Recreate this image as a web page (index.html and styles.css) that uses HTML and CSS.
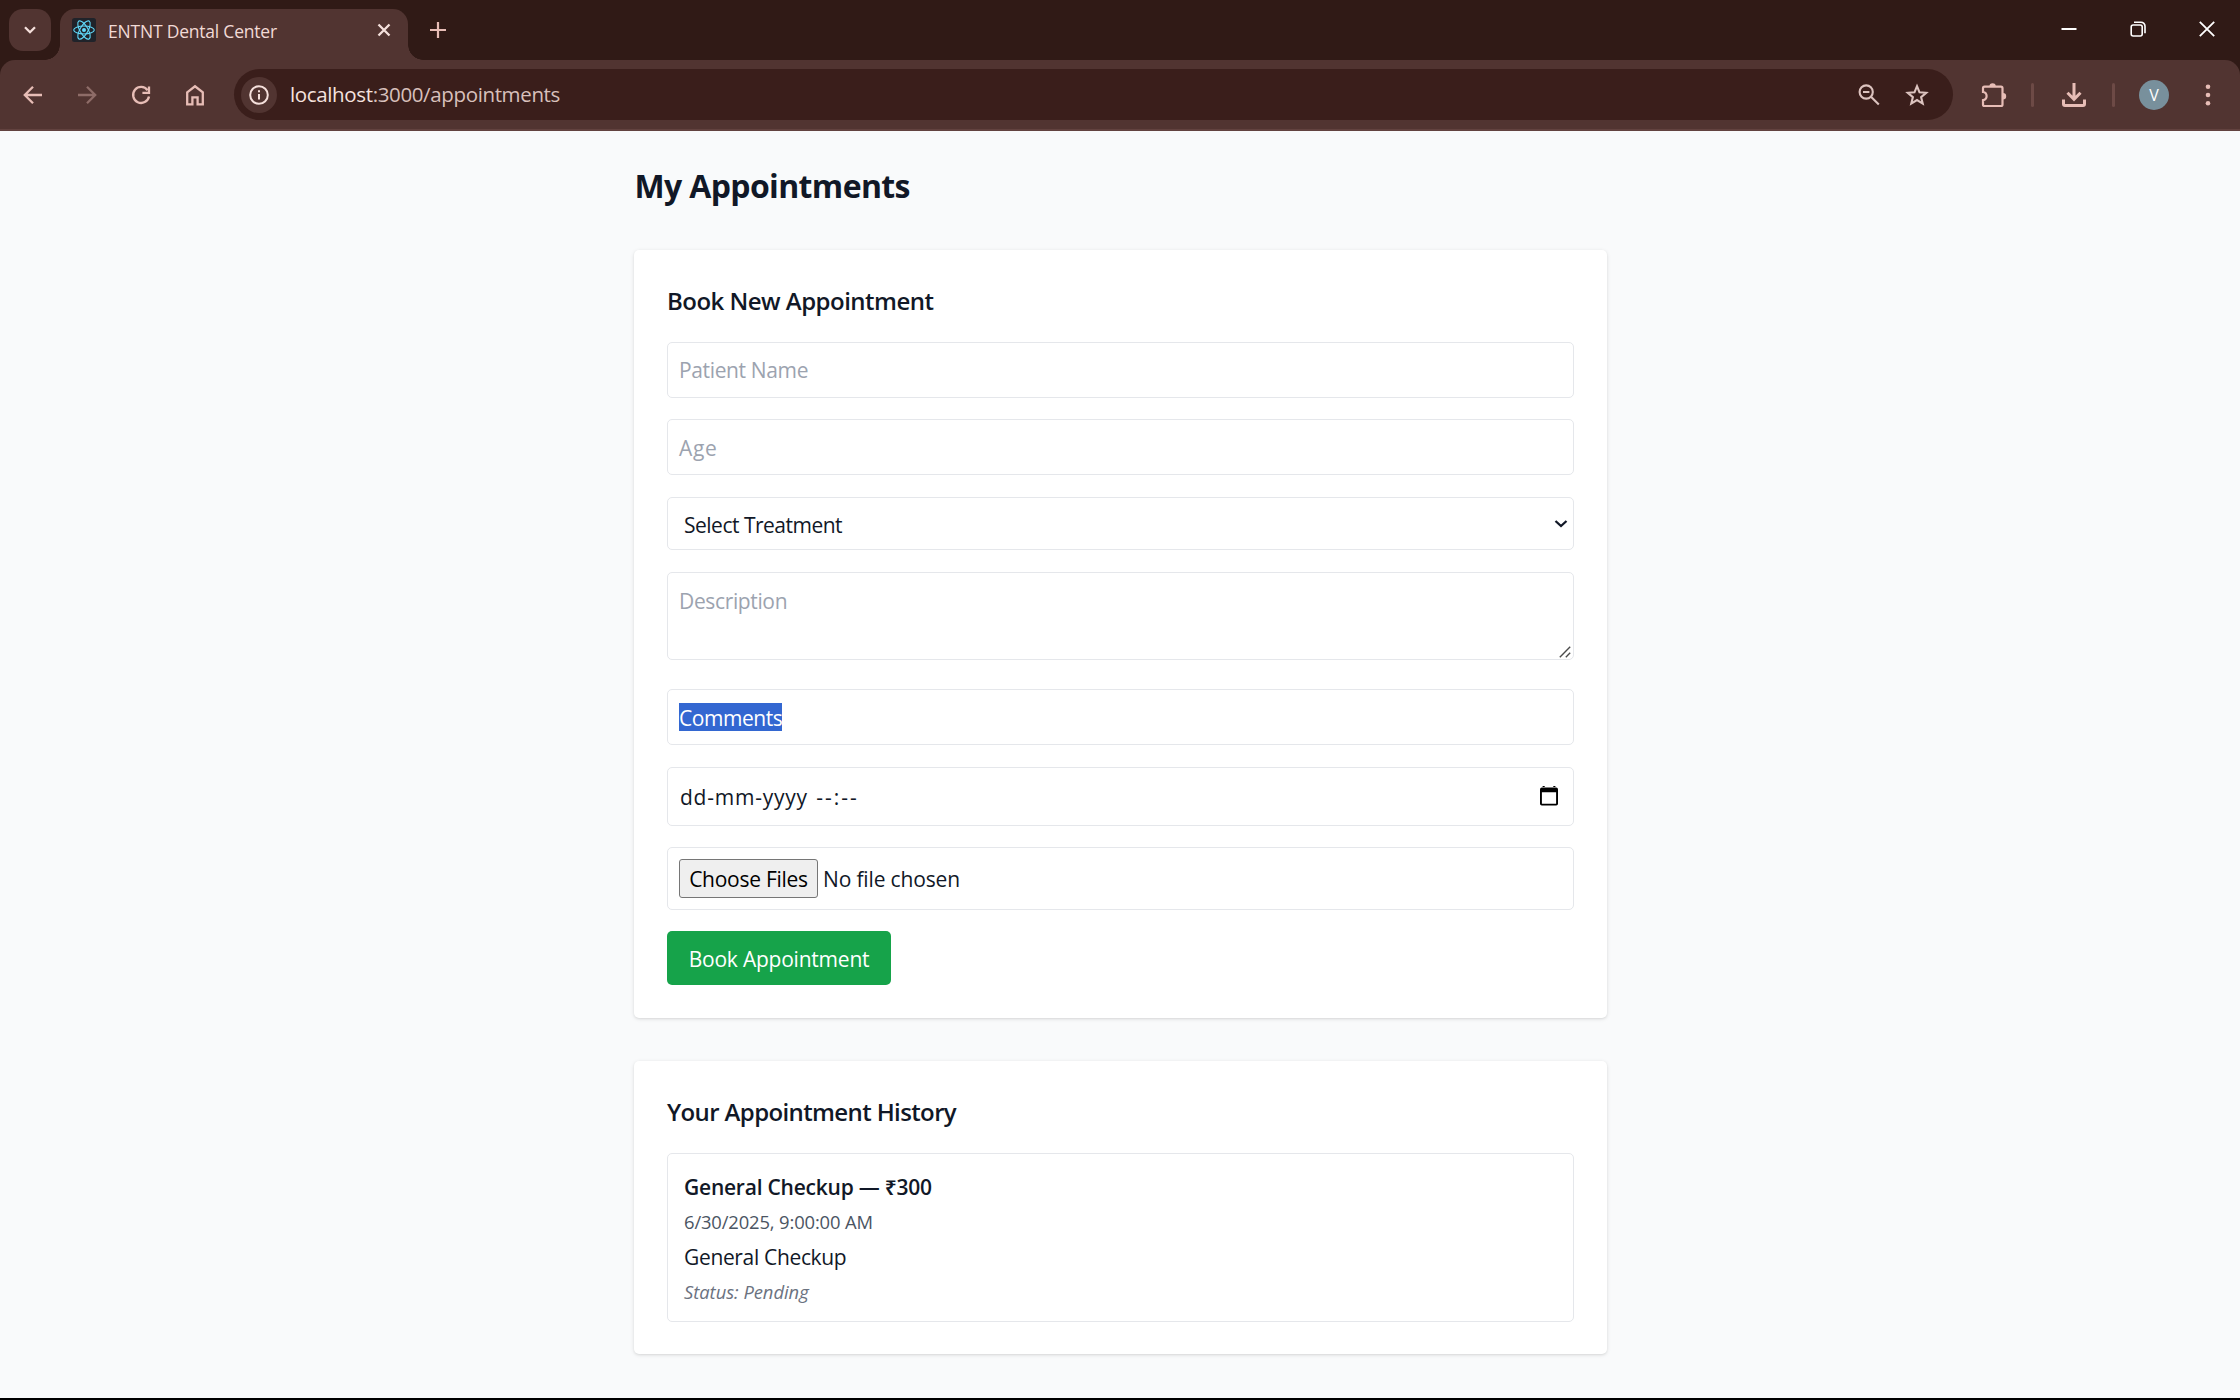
FILE: index.html
```html
<!DOCTYPE html>
<html lang="en">
<head>
<meta charset="utf-8">
<title>ENTNT Dental Center</title>
<link rel="stylesheet" href="styles.css">
</head>
<body>
<div class="browser">
  <header class="tabstrip">
    <button class="tab-search" aria-label="Search tabs">
      <svg width="12" height="8" viewBox="0 0 12 8"><path d="M1 1.200l5 5 5-5" fill="none" stroke="#f5e0dc" stroke-width="2.300"/></svg>
    </button>
    <div class="tab">
      <svg class="favicon" width="24" height="24" viewBox="0 0 24 24"><rect width="24" height="24" rx="2.500" fill="#20232a"/><g fill="none" stroke="#61dafb" stroke-width="1.100"><ellipse cx="12" cy="12" rx="10.300" ry="4"/><ellipse cx="12" cy="12" rx="10.300" ry="4" transform="rotate(60 12 12)"/><ellipse cx="12" cy="12" rx="10.300" ry="4" transform="rotate(120 12 12)"/></g><circle cx="12" cy="12" r="2" fill="#61dafb"/></svg>
      <span class="tab-title">ENTNT Dental Center</span>
      <svg class="tab-close" width="14" height="14" viewBox="0 0 14 14"><path d="M1.500 1.500l11 11M12.500 1.500l-11 11" stroke="#f5e0dc" stroke-width="2.300"/></svg>
    </div>
    <svg class="new-tab" width="16" height="16" viewBox="0 0 16 16"><path d="M8 0v16M0 8h16" stroke="#e7bdb6" stroke-width="2.200"/></svg>
    <div class="window-controls">
      <svg width="16" height="16" viewBox="0 0 16 16"><path d="M.5 8h15" stroke="#fff" stroke-width="2"/></svg>
      <svg width="16" height="16" viewBox="0 0 16 16" fill="none" stroke="#fff" stroke-width="1.600"><rect x="1.200" y="4" width="11" height="11" rx="2"/><path d="M4 1.200h7a4 4 0 0 1 4 4v7"/></svg>
      <svg width="16" height="16" viewBox="0 0 16 16"><path d="M.8.8l14.400 14.400M15.200.8L.8 15.200" stroke="#fff" stroke-width="1.800"/></svg>
    </div>
  </header>
  <nav class="toolbar">
    <div class="nav-buttons">
      <svg width="24" height="24" viewBox="0 0 24 24" fill="none" stroke="#e7bdb6" stroke-width="2.300"><path d="M21 12H4.500M12 3.800L3.800 12l8.200 8.200"/></svg>
      <svg width="24" height="24" viewBox="0 0 24 24" fill="none" stroke="#8e6c68" stroke-width="2.300"><path d="M3 12h16.500M12 3.800l8.200 8.200-8.200 8.200"/></svg>
      <svg width="24" height="24" viewBox="0 0 24 24" fill="none" stroke="#e7bdb6" stroke-width="2.300"><path d="M18.600 7.200A8 8 0 1 0 20 13.500"/><path d="M20 3.500v6.400h-6.600"/></svg>
      <svg width="24" height="24" viewBox="0 0 24 24" fill="none" stroke="#e7bdb6" stroke-width="2.300"><path d="M4.200 9.300L12 3.300l7.800 6v12h-5.200v-7H9.400v7H4.200z"/></svg>
    </div>
    <div class="omnibox">
      <span class="site-info"><svg width="20" height="20" viewBox="0 0 20 20"><circle cx="10" cy="10" r="8.800" fill="none" stroke="#f5e0dc" stroke-width="2"/><path d="M10 9v5.500M10 5.300v2" stroke="#f5e0dc" stroke-width="2"/></svg></span>
      <span class="url"><span class="host">localhost</span>:3000/appointments</span>
      <svg class="zoom" width="24" height="24" viewBox="0 0 24 24" fill="none" stroke="#dcc3bf" stroke-width="2.100"><circle cx="9.200" cy="9" r="6.600"/><path d="M14 13.800l7.800 7.800M6 9h6.400"/></svg>
      <svg width="24" height="24" viewBox="0 0 24 24" fill="none" stroke="#dcc3bf" stroke-width="2.100"><path d="M12 3.200l2.500 6.100 6.700.5-5.100 4.300 1.600 6.500-5.700-3.500-5.700 3.500 1.600-6.500-5.100-4.300 6.700-.5z"/></svg>
    </div>
    <svg class="extensions" width="26" height="26" viewBox="0 0 26 26"><path d="M3.500 4.700H20a1.500 1.500 0 0 1 1.500 1.500v16.300a1.500 1.500 0 0 1-1.500 1.500H3.500A1.500 1.500 0 0 1 2 22.500v-4.300c4.800-.6 4.800-7.600 0-8.200V6.200a1.500 1.500 0 0 1 1.500-1.500z" fill="none" stroke="#e7bdb6" stroke-width="2.200"/><path d="M8.400 4.500a3.200 3.200 0 0 1 6.400 0zM22 11a3.200 3.200 0 0 1 0 6.400z" fill="#e7bdb6"/></svg>
    <i class="divider"></i>
    <svg class="download" width="24" height="24" viewBox="0 0 24 24" fill="none" stroke="#e7bdb6" stroke-width="3"><path d="M12 0v16M5.500 9.800l6.500 6.500 6.500-6.500"/><path d="M1.500 16.500v4.500a1.500 1.500 0 0 0 1.500 1.500h18a1.500 1.500 0 0 0 1.500-1.500v-4.500"/></svg>
    <i class="divider"></i>
    <span class="avatar">V</span>
    <svg class="menu" width="6" height="22" viewBox="0 0 6 22" fill="#e7bdb6"><circle cx="3" cy="2.800" r="2.300"/><circle cx="3" cy="11" r="2.300"/><circle cx="3" cy="19.200" r="2.300"/></svg>
  </nav>
  <main class="page">
    <div class="content">
      <h1 class="page-title">My Appointments</h1>
      <section class="card">
        <h2 class="card-title book-title">Book New Appointment</h2>
        <form class="form">
          <div class="field placeholder"><span class="t-name">Patient Name</span></div>
          <div class="field placeholder age"><span class="t-age">Age</span></div>
          <div class="field select"><span class="t-select">Select Treatment</span>
            <svg width="14" height="8" viewBox="0 0 14 8"><path d="M1.500 1l5.500 5 5.500-5" fill="none" stroke="#111827" stroke-width="2.300"/></svg>
          </div>
          <div class="field placeholder textarea"><span class="t-desc">Description</span>
            <svg class="grip" width="12" height="12" viewBox="0 0 12 12"><path d="M.8 11.200L11.200.8M6.800 11.200l4.400-4.400" stroke="#4b4b4b" stroke-width="1.400"/></svg>
          </div>
          <div class="field comments"><span class="selected">Comments</span></div>
          <div class="field date"><span class="t-date">dd-mm-yyyy</span><span class="t-time">--:--</span>
            <svg width="18" height="20" viewBox="0 0 18 20"><path d="M1.800 1.600h14.400A1.800 1.800 0 0 1 18 3.400v14.300a1.800 1.800 0 0 1-1.800 1.800H1.800A1.800 1.800 0 0 1 0 17.700V3.400a1.800 1.800 0 0 1 1.800-1.800zM1.900 6.200v11.500h14.200V6.200zM2.600 0h2.100v2H2.600zM13.300 0h2.100v2h-2.100z" fill-rule="evenodd"/></svg>
          </div>
          <div class="field file"><span class="choose">Choose Files</span><span class="t-none">No file chosen</span></div>
          <button type="button" class="submit">Book Appointment</button>
        </form>
      </section>
      <section class="card">
        <h2 class="card-title history-title">Your Appointment History</h2>
        <article class="visit">
          <p class="visit-name">General Checkup — ₹300</p>
          <p class="visit-date">6/30/2025, 9:00:00 AM</p>
          <p class="visit-desc">General Checkup</p>
          <p class="visit-status">Status: Pending</p>
        </article>
      </section>
    </div>
  </main>
</div>
</body>
</html>
```
FILE: styles.css
```css
* { box-sizing: border-box; }
body { margin: 0; font-family: "Open Sans", "Noto Sans", sans-serif; font-size: 21px; color: #111827; }
h1, h2, p { margin: 0; }
svg { display: block; flex: none; }
button { border: 0; padding: 0; font: inherit; }
span { white-space: nowrap; }

.browser { height: 1400px; display: flex; flex-direction: column; overflow: hidden; background: #000; }

/* Tab strip: extends behind the toolbar's rounded top corners */
.tabstrip { height: 75px; margin-bottom: -15px; flex: none; display: flex; align-items: flex-start; padding: 9px 25px 0 9px; background: #301a16; }
.tab-search { width: 42px; height: 42px; border-radius: 14px; background: #513431; display: flex; align-items: center; justify-content: center; }
.tab { position: relative; width: 348px; height: 51px; margin-left: 9px; padding: 0 17px 9px 12px; border-radius: 15px 15px 0 0; background: #513431; display: flex; align-items: center; }
.tab::before, .tab::after { content: ""; position: absolute; bottom: 0; width: 15px; height: 15px; }
.tab::before { left: -15px; background: radial-gradient(circle at 0 0, transparent 14.5px, #513431 15px); }
.tab::after { right: -15px; background: radial-gradient(circle at 100% 0, transparent 14.5px, #513431 15px); }
.tab-title { margin-left: 12px; padding-top: 2px; font-size: 17.5px; letter-spacing: -.21px; color: #f1dad6; }
.tab-close { margin-left: auto; }
.new-tab { margin: 13px 0 0 22px; }
.window-controls { margin: 12px 0 0 auto; display: flex; gap: 53px; }

/* Toolbar */
.toolbar { position: relative; height: 71px; flex: none; display: flex; align-items: center; padding: 0 29px 0 21px; background: linear-gradient(#62423f, #62423f) bottom / 100% 2px no-repeat #513431; border-radius: 15px 15px 0 0; }
.nav-buttons { display: flex; gap: 30px; margin-top: -1px; }
.omnibox { width: 1719px; height: 51px; margin: -2px 0 0 27px; padding: 0 24px 0 7px; border-radius: 26px; background: #3a1e1b; display: flex; align-items: center; }
.site-info { width: 36px; height: 36px; border-radius: 50%; background: #513431; display: flex; align-items: center; justify-content: center; }
.url { margin: 0 auto 2px 13px; font-size: 20.5px; letter-spacing: -.36px; color: #d8c0bc; }
.host { color: #f5e2df; }
.zoom { margin-right: 24px; }
.extensions { margin: -2px 0 0 28px; }
.divider { width: 3px; height: 24px; border-radius: 2px; background: #6d4a46; margin: -1px 0 0 24px; }
.download { margin: 0 0 1px 28px; }
.download + .divider { margin-left: 26px; }
.avatar { width: 30px; height: 30px; margin: -1px 0 0 24px; border-radius: 50%; background: #78909c; color: #fff; font-size: 16px; line-height: 30px; text-align: center; }
.menu { margin: -1px 0 0 auto; }

/* Page */
.page { height: 1267px; flex: none; background: #f9fafb; padding-left: 1px; }
.content { width: 973px; margin: 0 auto; padding-top: 33px; }
.page-title { font-size: 32px; line-height: 43px; letter-spacing: -.64px; margin-bottom: 43px; padding-left: .5px; }
.card { background: #fff; border-radius: 5px; padding: 32px 33px 33px; box-shadow: 0 1px 4px rgba(0,0,0,.1), 0 1px 3px -1px rgba(0,0,0,.12); }
.card + .card { margin-top: 43px; padding-bottom: 32px; }
.card-title { font-weight: 600; font-size: 24px; line-height: 38px; margin-bottom: 22px; }
.book-title { letter-spacing: -.52px; }
.history-title { letter-spacing: -.62px; }

.form { display: flex; flex-direction: column; align-items: flex-start; }
.field { width: 100%; height: 56px; border: 1px solid #e5e7eb; border-radius: 5px; padding: 0 11px; display: flex; align-items: center; margin-bottom: 21px; line-height: 28px; }
.placeholder { color: #9ca3af; }
.age { margin-bottom: 22px; padding-top: 2px; }
.select { height: 53px; padding: 1px 5px 0 16px; justify-content: space-between; margin-bottom: 22px; }
.textarea { height: 88px; padding: 14px 2px 1px 11px; align-items: flex-start; justify-content: space-between; margin-bottom: 29px; }
.grip { align-self: flex-end; }
.selected { height: 28px; line-height: 30px; background: #3367d1; color: #fff; letter-spacing: -.45px; }
.comments { margin-bottom: 22px; }
.date { height: 59px; padding: 0 15px 0 12px; }
.date svg { margin: 0 0 2px auto; }
.file { height: 63px; }
.choose { width: 139px; height: 39px; border: 1px solid #767676; border-radius: 3px; background: #efefef; color: #000; text-align: center; line-height: 38px; letter-spacing: -.26px; }
.submit { width: 224px; height: 54px; padding-top: 2px; border-radius: 5px; background: #16a34a; color: #fff; line-height: 52px; letter-spacing: -.22px; }
.t-name { letter-spacing: -.36px; }
.t-age { letter-spacing: .6px; }
.t-select { padding-top: 2px; letter-spacing: -.5px; }
.t-desc { letter-spacing: -.36px; }
.t-date { letter-spacing: .76px; }
.t-time { margin-left: 8.5px; letter-spacing: 2px; }
.t-none { margin-left: 5px; letter-spacing: -.15px; }

.visit { height: 169px; border: 1px solid #e5e7eb; border-radius: 5px; padding: 16px 16px 0; line-height: 35px; }
.visit-name { font-weight: 600; letter-spacing: -.23px; }
.visit-date { font-size: 18.4px; line-height: 34px; letter-spacing: -.14px; color: #4b5563; }
.visit-desc { line-height: 36px; letter-spacing: -.34px; }
.visit-status { font-size: 18.4px; line-height: 34px; letter-spacing: -.04px; font-style: italic; color: #6b7280; }
```
